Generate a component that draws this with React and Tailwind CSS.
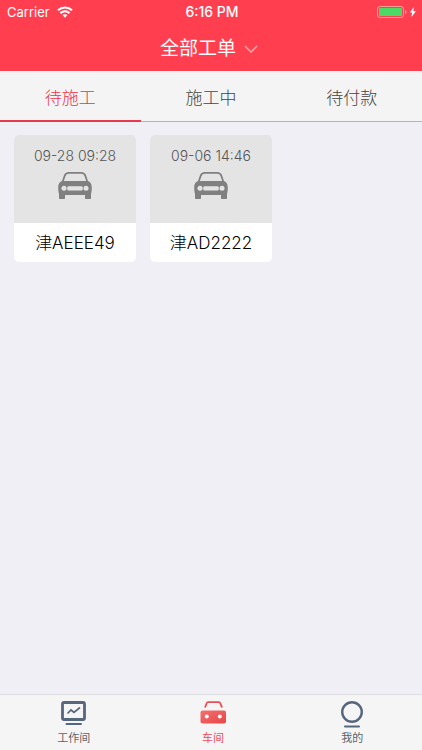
import React, { useState } from "react";

const orders = [
  { time: "09-28 09:28", plate: "津AEEE49" },
  { time: "09-06 14:46", plate: "津AD2222" },
];

const tabs = ["待施工", "施工中", "待付款"];

function WifiIcon() {
  return (
    <svg className="h-3 w-4" viewBox="0 0 16 12" fill="none" stroke="white" strokeWidth="2.1" aria-hidden="true">
      <path d="M.9 4.3C5 .5 11 .5 15.1 4.3" />
      <path d="M3.4 7.1c2.7-2.4 6.5-2.4 9.2 0" />
      <path d="M5.5 9.1c1.5-1.2 3.5-1.2 5 0L8 11.7z" fill="white" stroke="none" />
    </svg>
  );
}

function BatteryIcon() {
  return (
    <svg className="h-3 w-10" viewBox="0 0 40 12" aria-hidden="true">
      <rect x=".5" y=".5" width="26" height="11" rx="2.5" fill="none" stroke="#ff9f98" />
      <rect x="2" y="2" width="23" height="8" rx="1" fill="#4cd964" />
      <path d="M28 4c2 .6 2 3.4 0 4z" fill="#ffa5a9" />
      <path d="M37 .8 32.8 6.5h2.4l-1 4.7L39 5.3h-2.7z" fill="white" />
    </svg>
  );
}

function CarIcon() {
  return (
    <svg className="h-7 w-[34px]" viewBox="0 0 34 28" aria-hidden="true">
      <path d="M4.4 10.5 6.6 4Q7.6.9 11 .9h12q3.4 0 4.400 3.100l2.200 6.500" fill="none" stroke="#808080" strokeWidth="1.8" />
      <path
        fill="#808080"
        d="M5 9h24c3.3 0 4.8 3 4.8 6.5 0 3-.3 5-.8 6.5v4.2q0 .8-.8.8h-4.4q-.8 0-.8-.8V23H7v3.2q0 .8-.8.8H1.8q-.8 0-.8-.8V22C.5 20.5.2 18.5.2 15.5.2 12 1.7 9 5 9z"
      />
      <circle cx="6" cy="16.3" r="2.5" fill="#e4e4e4" />
      <circle cx="28" cy="16.3" r="2.5" fill="#e4e4e4" />
      <rect x="9.3" y="14.3" width="15.4" height="4.2" rx="1.2" fill="#e4e4e4" />
    </svg>
  );
}

function WorkIcon() {
  return (
    <svg className="h-7 w-7" viewBox="0 0 28 28" fill="none" stroke="#56677d" aria-hidden="true">
      <rect x="2.5" y="2.5" width="22" height="17" rx="1.5" strokeWidth="2.8" />
      <path d="m7.5 13.500 3.500-3.500 3 2.500 6-5" strokeWidth="1.7" />
      <path d="M6.500 24h14.500" strokeWidth="2" strokeLinecap="round" />
    </svg>
  );
}

function WorkshopIcon() {
  return (
    <svg className="h-7 w-7" viewBox="0 0 28 28" aria-hidden="true">
      <defs>
        <linearGradient id="workshop-body" x1="0" y1="0" x2="1" y2="1">
          <stop offset="0" stopColor="#f4706c" />
          <stop offset="1" stopColor="#e8444a" />
        </linearGradient>
      </defs>
      <path d="M6 7.5 7.8 3q.3-.9 1.3-.9h10.8q1 0 1.3.9L23 7.5" fill="none" stroke="#e85055" strokeWidth="1.9" />
      <rect x="1.5" y="10.5" width="25.5" height="13" rx="2" fill="url(#workshop-body)" />
      <circle cx="7.8" cy="16.5" r="2" fill="white" />
      <circle cx="20.8" cy="16.5" r="2" fill="white" />
    </svg>
  );
}

function ProfileIcon() {
  return (
    <svg className="h-7 w-7" viewBox="0 0 28 28" fill="none" stroke="#56677d" aria-hidden="true">
      <circle cx="14" cy="12" r="9.8" strokeWidth="2.4" />
      <path d="M7 26.5h14" strokeWidth="2" strokeLinecap="round" />
    </svg>
  );
}

const navItems = [
  { label: "工作间", Icon: WorkIcon },
  { label: "车间", Icon: WorkshopIcon },
  { label: "我的", Icon: ProfileIcon },
];

export default function App() {
  const [active, setActive] = useState(0);
  const [page, setPage] = useState(1);

  return (
    <div className="flex min-h-screen flex-col bg-[#efeff5] font-['Inter','Noto_Sans_CJK_SC',sans-serif]">
      <header className="bg-[#ff3f4f] text-white">
        <div className="grid h-6 grid-cols-3 items-center pr-[5px] pl-[7px] leading-5">
          <div className="flex items-center gap-[7px] text-[13px]">
            <span>Carrier</span>
            <WifiIcon />
          </div>
          <span className="text-center text-[14px] font-medium">6:16 PM</span>
          <div className="flex justify-end">
            <BatteryIcon />
          </div>
        </div>
        <div className="flex h-[47px] items-center justify-center pt-0.5 pr-1">
          <button type="button" className="flex items-center gap-2">
            <h1 className="text-[19px] leading-6 font-normal">全部工单</h1>
            <svg className="h-2 w-[14px]" viewBox="0 0 14 8" fill="none" stroke="#ffb0b3" strokeWidth="1.3" aria-hidden="true">
              <path d="m1 1 6 6 6-6" />
            </svg>
          </button>
        </div>
      </header>

      <div role="tablist" className="grid h-[51px] grid-cols-3 bg-[#f4f4f4]">
        {tabs.map((tab, i) => (
          <button
            key={tab}
            type="button"
            role="tab"
            aria-selected={i === active}
            onClick={() => setActive(i)}
            className={
              i === active
                ? "border-b-2 border-[#e8394c] pt-1.5 text-[17px] font-light text-[#f0304a]"
                : "border-b border-[#b4b4b6] pt-1.5 text-[17px] font-light text-[#444444]"
            }
          >
            {tab}
          </button>
        ))}
      </div>

      <main className="grid flex-1 grid-cols-3 content-start gap-3.5 px-3.5 pt-[13px]">
        {orders.map((order) => (
          <article key={order.plate} className="overflow-hidden rounded-[5px] bg-white text-center">
            <div className="flex h-[88px] flex-col items-center gap-1.5 bg-[#e4e4e4] pt-[11px]">
              <time className="text-[14px] leading-5 font-light text-[#555555]">{order.time}</time>
              <CarIcon />
            </div>
            <h2 className="pt-px text-[17px] leading-[38px] font-light text-black">{order.plate}</h2>
          </article>
        ))}
      </main>

      <nav className="grid h-14 grid-cols-3 border-t border-[#dcdce0] bg-[#f5f5f5] pl-1">
        {navItems.map(({ label, Icon }, i) => (
          <button
            key={label}
            type="button"
            onClick={() => setPage(i)}
            aria-current={i === page ? "page" : undefined}
            className={
              i === page
                ? "flex flex-col items-center pt-[5px] text-[11px] leading-5 text-[#e8505c]"
                : "flex flex-col items-center pt-[5px] text-[11px] leading-5 text-[#5f6266]"
            }
          >
            <Icon />
            {label}
          </button>
        ))}
      </nav>
    </div>
  );
}
